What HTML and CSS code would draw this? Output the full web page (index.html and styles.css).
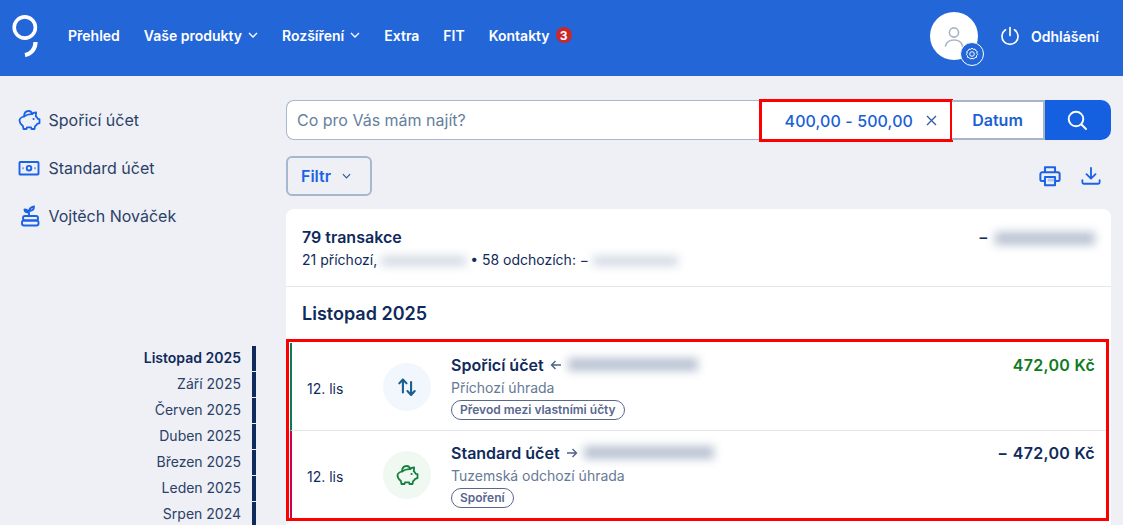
FILE: index.html
```html
<!DOCTYPE html>
<html lang="cs">
<head>
  <meta charset="UTF-8" />
  <title>Přehled</title>
  <link rel="stylesheet" href="styles.css">
</head>
<body>
  <header class="topbar">
    <svg class="logo" width="26" height="42" viewBox="0 0 26 42" fill="none" stroke="#fff">
      <circle cx="12.8" cy="12.500" r="10.600" stroke-width="3.600" />
      <path d="M23.500 27 C23.500 34 19 39 13 40" stroke-width="4.200" />
    </svg>
    <nav class="mainnav">
      <a href="#">Přehled</a>
      <a href="#">Vaše produkty <svg class="chev" width="10" height="6" viewBox="0 0 10 6"><path d="M1 1l4 4 4-4" /></svg></a>
      <a href="#">Rozšíření <svg class="chev" width="10" height="6" viewBox="0 0 10 6"><path d="M1 1l4 4 4-4" /></svg></a>
      <a href="#">Extra</a>
      <a href="#">FIT</a>
      <a href="#">Kontakty <span class="badge">3</span></a>
    </nav>
    <div class="user">
      <div class="avatar">
        <svg class="person" width="24" height="24" viewBox="0 0 24 24" fill="none" stroke="#a7b4c6" stroke-width="1.600" stroke-linecap="round">
          <circle cx="12" cy="7.500" r="4.600" />
          <path d="M3.500 21c1-4.200 4.500-6 8.500-6s7.500 1.800 8.500 6" />
        </svg>
        <span class="gear">
          <svg width="14" height="14" viewBox="0 0 14 14" fill="none" stroke="#fff" stroke-width="1">
            <path d="M7 1.200l1.300 1.100 1.700-.2.700 1.600 1.500.8-.4 1.700.9 1.300-1.200 1.200-.1 1.700-1.700.3-1.100 1.300-1.600-.7-1.600.7-1.100-1.300-1.700-.3-.1-1.700-1.200-1.200.9-1.300-.4-1.700 1.500-.8.700-1.600 1.700.2z" />
            <circle cx="7" cy="7" r="2.300" />
          </svg>
        </span>
      </div>
      <a href="#" class="logout">
        <svg width="20" height="20" viewBox="0 0 20 20" fill="none" stroke="#fff" stroke-width="1.700" stroke-linecap="round">
          <path d="M10 1.500v8" />
          <path d="M5.500 3.800a8 8 0 1 0 9 0" />
        </svg>
        Odhlášení
      </a>
    </div>
  </header>

  <div class="page">
    <aside class="side">
      <ul class="accounts">
        <li>
          <svg width="24" height="24" viewBox="0 0 24 24" fill="none" stroke="#1a62e6" stroke-width="1.800" stroke-linejoin="round" stroke-linecap="round">
            <path d="M7 8.500C7.200 5 9 3 11.500 3c2 0 3.300 1.200 3.600 3.200 1.200-1.300 2.700-1.800 4-1.700l-.3 3.700c1 .8 1.600 1.600 2 2.600l1.700.4v4l-2.200.6c-.5.9-1.200 1.700-2.300 2.400l-.5 2.800h-3l-.4-1.600h-4.200l-.4 1.600h-3l-.6-3C3.500 16 2.500 14.200 2.500 12.500c0-1.800 1.800-3.300 4.500-4z" />
            <path d="M7 8.500c2.500-1.800 5.300-2.500 8-2.300" />
            <path d="M16.500 11h.1" stroke-width="2" />
          </svg>
          Spořicí účet
        </li>
        <li>
          <svg width="24" height="24" viewBox="0 0 24 24" fill="none" stroke="#1a62e6" stroke-width="1.900">
            <rect x="2.500" y="6" width="19" height="12.500" rx=".8" />
            <circle cx="12" cy="12.200" r="2.300" />
            <path d="M5.500 12.200h1M17.500 12.200h1" stroke-width="2" />
          </svg>
          Standard účet
        </li>
        <li>
          <svg width="24" height="24" viewBox="0 0 24 24" fill="none" stroke="#1a62e6" stroke-width="1.900" stroke-linecap="round" stroke-linejoin="round">
            <path d="M12 12V7.500M12 8.500C11 6 9 5.500 7.500 5.500c0 2 1.500 3 4.500 3zM12 7c.5-2.500 2.500-4 5-4.500 0 3-2 4.500-5 4.500z" />
            <rect x="6" y="12" width="15" height="4.500" rx="2" />
            <rect x="5" y="16.500" width="16.500" height="5" rx="2" />
          </svg>
          Vojtěch Nováček
        </li>
      </ul>
      <ul class="months">
        <li class="current">Listopad 2025</li>
        <li>Září 2025</li>
        <li>Červen 2025</li>
        <li>Duben 2025</li>
        <li>Březen 2025</li>
        <li>Leden 2025</li>
        <li>Srpen 2024</li>
      </ul>
    </aside>

    <main class="content">
      <form class="search">
        <input type="text" placeholder="Co pro Vás mám najít?" />
        <div class="chip">
          400,00 - 500,00
          <svg width="11" height="11" viewBox="0 0 11 11" fill="none" stroke="#2f5aa8" stroke-width="1.300"><path d="M1 1l9 9M10 1l-9 9" /></svg>
        </div>
        <button type="button" class="date-btn">Datum</button>
        <button type="button" class="search-btn">
          <svg width="22" height="22" viewBox="0 0 22 22" fill="none" stroke="#fff" stroke-width="1.900" stroke-linecap="round"><circle cx="10" cy="10" r="7.300" /><path d="M15.500 15.500l4.500 4.500" /></svg>
        </button>
      </form>

      <div class="tools">
        <button type="button" class="filter">Filtr <svg class="chev" width="9" height="6" viewBox="0 0 10 6"><path d="M1 1l4 4 4-4" /></svg></button>
        <div class="tool-icons">
          <svg width="22" height="22" viewBox="0 0 24 24" fill="none" stroke="#1a62e6" stroke-width="2.200" stroke-linejoin="round">
            <path d="M6.500 8V2.500h11V8" />
            <path d="M6 17.500H3a1.500 1.500 0 0 1-1.500-1.500v-6A2 2 0 0 1 3.500 8h17a2 2 0 0 1 2 2v6a1.500 1.500 0 0 1-1.500 1.500h-3" />
            <rect x="6.500" y="13" width="11" height="9" />
            <rect x="9.500" y="15" width="7" height="3" fill="#a9c3f2" stroke="none" />
          </svg>
          <svg width="20" height="20" viewBox="0 0 22 22" fill="none" stroke="#1a62e6" stroke-width="2" stroke-linecap="round" stroke-linejoin="round">
            <path d="M11 2v11.500M6 9l5 5 5-5" />
            <path d="M1.500 15.500V18a1.500 1.500 0 0 0 1.500 1.500h16a1.500 1.500 0 0 0 1.500-1.500v-2.500" />
          </svg>
        </div>
      </div>

      <section class="card">
        <div class="summary">
          <div>
            <strong>79 transakce</strong>
            <p>21 příchozí, <span class="blur blur-sm"></span> • 58 odchozích: − <span class="blur blur-sm"></span></p>
          </div>
          <div class="total">− <span class="blur blur-total"></span></div>
        </div>
        <h2>Listopad 2025</h2>
        <div class="rows">
          <div class="row in">
            <span class="date">12. lis</span>
            <span class="circle blue">
              <svg width="20" height="20" viewBox="0 0 22 22" fill="none" stroke="#17608f" stroke-width="2.300" stroke-linecap="round" stroke-linejoin="round">
                <path d="M6.500 17V3M2.500 7l4-4.200 4 4.200" />
                <path d="M15.500 5.500v14M11.500 15.500l4 4.200 4-4.200" />
              </svg>
            </span>
            <div class="info">
              <div class="title">Spořicí účet
                <svg class="arrow" width="12" height="10" viewBox="0 0 12 10"><path d="M11 5H1.500M5.500 1l-4 4 4 4" /></svg>
                <span class="blur blur-name"></span>
              </div>
              <div class="sub">Příchozí úhrada</div>
              <span class="tag">Převod mezi vlastními účty</span>
            </div>
            <span class="amount plus">472,00 Kč</span>
          </div>
          <div class="row out">
            <span class="date">12. lis</span>
            <span class="circle green">
              <svg width="24" height="24" viewBox="0 0 24 24" fill="none" stroke="#15803d" stroke-width="1.800" stroke-linejoin="round" stroke-linecap="round">
                <path d="M7 8.500C7.200 5 9 3 11.500 3c2 0 3.300 1.200 3.600 3.200 1.200-1.300 2.700-1.800 4-1.700l-.3 3.700c1 .8 1.600 1.600 2 2.600l1.700.4v4l-2.200.6c-.5.9-1.200 1.700-2.300 2.400l-.5 2.800h-3l-.4-1.600h-4.200l-.4 1.600h-3l-.6-3C3.500 16 2.500 14.200 2.500 12.500c0-1.800 1.800-3.300 4.500-4z" />
                <path d="M7 8.500c2.500-1.800 5.300-2.500 8-2.300" />
                <path d="M16.500 11h.1" stroke-width="2" />
              </svg>
            </span>
            <div class="info">
              <div class="title">Standard účet
                <svg class="arrow" width="12" height="10" viewBox="0 0 12 10"><path d="M1 5h9.500M6.500 1l4 4-4 4" /></svg>
                <span class="blur blur-name"></span>
              </div>
              <div class="sub">Tuzemská odchozí úhrada</div>
              <span class="tag">Spoření</span>
            </div>
            <span class="amount">− 472,00 Kč</span>
          </div>
        </div>
      </section>
    </main>
  </div>
</body>
</html>
```

FILE: styles.css
```css
html, body {
  height: 100%;
  overflow: hidden;
}

body {
  margin: 0;
  font-family: Inter, "Noto Sans", sans-serif;
  color: #0f2a5c;
  background-color: #eef0f5;
}

ul {
  list-style: none;
  margin: 0;
  padding: 0;
}

/* Horni lista */
.topbar {
  display: flex;
  align-items: center;
  box-sizing: border-box;
  height: 76px;
  padding: 0 24px 4px 12px;
  background-color: #2366d8;
}

.logo {
  flex-shrink: 0;
}

.mainnav {
  display: flex;
  align-items: center;
  gap: 24px;
  margin: 0 0 2px 30px;
  flex: 1;
}

.mainnav a,
.logout {
  display: flex;
  align-items: center;
  gap: 6px;
  color: #fff;
  font-size: 14px;
  font-weight: 600;
  text-decoration: none;
  white-space: nowrap;
}

.chev {
  fill: none;
  stroke: currentColor;
  stroke-width: 1.300;
}

.badge {
  display: flex;
  align-items: center;
  justify-content: center;
  width: 16px;
  height: 16px;
  border-radius: 50%;
  background-color: #c9282d;
  font-size: 12px;
  font-weight: 700;
}

.user {
  display: flex;
  align-items: center;
  gap: 22px;
}

.avatar {
  position: relative;
  display: flex;
  align-items: center;
  justify-content: center;
  width: 48px;
  height: 48px;
  border-radius: 50%;
  background-color: #fff;
}

.person {
  margin-top: 1px;
}

.gear {
  position: absolute;
  right: -6px;
  bottom: -6px;
  display: flex;
  align-items: center;
  justify-content: center;
  width: 22px;
  height: 22px;
  border: 1px solid #fff;
  border-radius: 50%;
  background-color: #2366d8;
}

.logout {
  gap: 11px;
}

/* Rozlozeni */
.page {
  display: flex;
}

.side {
  width: 256px;
  margin-right: 30px;
  flex-shrink: 0;
}

.accounts {
  padding: 20px 0 0 17px;
}

.accounts li {
  display: flex;
  align-items: center;
  gap: 7.500px;
  height: 48px;
  font-size: 16px;
  color: #2b4067;
}

.months {
  margin-top: 106px;
}

.months li {
  height: 25px;
  margin-bottom: 1px;
  padding-right: 11px;
  border-right: 4px solid #0f2a5c;
  font-size: 14px;
  line-height: 24px;
  text-align: right;
  color: #2b4067;
}

.months .current {
  font-weight: 600;
  color: #0f2a5c;
}

.content {
  flex: 1;
  margin-right: 12px;
  min-width: 0;
}

/* Hledani */
.search {
  display: flex;
  height: 40px;
  margin-top: 24px;
}

.search input {
  flex: 1;
  min-width: 0;
  padding: 0 10px;
  border: 1px solid #a6b8cf;
  border-right: none;
  border-radius: 8px 0 0 8px;
  background-color: #fff;
  font-family: inherit;
  font-size: 16px;
  outline: none;
}

.search input::placeholder {
  color: #667f9c;
}

.chip {
  display: flex;
  align-items: center;
  justify-content: flex-end;
  gap: 13px;
  width: 188px;
  box-sizing: border-box;
  padding-right: 13px;
  margin: 2px 2px 1px;
  background-color: #fff;
  outline: 3px solid #f00;
  font-size: 16px;
  font-weight: 500;
  letter-spacing: .1px;
  color: #1a5fd6;
}

.date-btn {
  width: 93px;
  border: 2px solid #a6b5c8;
  border-left-width: 0;
  background-color: #fff;
  font-family: inherit;
  font-size: 16px;
  font-weight: 600;
  color: #1a5fd6;
}

.search-btn {
  display: flex;
  align-items: center;
  justify-content: center;
  width: 66px;
  padding: 0 2px 0 0;
  border: none;
  border-radius: 0 10px 10px 0;
  background-color: #1560e0;
}

.tools {
  display: flex;
  align-items: center;
  justify-content: space-between;
  margin-top: 16px;
  padding-right: 10px;
}

.filter {
  display: flex;
  align-items: center;
  justify-content: center;
  gap: 11px;
  width: 86px;
  height: 40px;
  padding: 0 6px 0 0;
  border: 2px solid #a6b8cf;
  border-radius: 6px;
  background-color: transparent;
  font-family: inherit;
  font-size: 16px;
  font-weight: 600;
  color: #1a62e6;
}

.filter .chev {
  color: #2b5a9e;
}

.tool-icons {
  display: flex;
  align-items: center;
  gap: 20px;
}

/* Karta s transakcemi */
.card {
  margin-top: 13px;
  border-radius: 8px 8px 0 0;
  background-color: #fff;
  height: 320px;
}

.summary {
  display: flex;
  justify-content: space-between;
  height: 78px;
  box-sizing: border-box;
  padding: 18px 16px 0;
  border-bottom: 1px solid #e4e7ee;
}

.summary strong {
  font-size: 16px;
  font-weight: 600;
}

.summary p {
  margin: 4px 0 0;
  font-size: 14px;
}

.total {
  font-size: 16px;
  font-weight: 500;
}

.blur {
  display: inline-block;
  vertical-align: middle;
  background-color: #b9c2d2;
  filter: blur(5px);
}

.blur-sm {
  width: 85px;
  height: 10px;
  background-color: #d3d9e4;
}

.blur-total {
  width: 100px;
  height: 13px;
  margin-left: 2px;
}

.blur-name {
  width: 130px;
  height: 13px;
}

.card h2 {
  margin: 0;
  height: 55px;
  padding: 16px 16px 0;
  box-sizing: border-box;
  font-size: 18px;
  line-height: 22px;
  font-weight: 600;
}

.rows {
  margin: 0 5px 0 3px;
  padding-top: 1px;
  outline: 3px solid #f00;
}

.row {
  display: flex;
  align-items: center;
  box-sizing: border-box;
  height: 87px;
  margin-left: 1px;
  padding-right: 11px;
  border-left: 2px solid #0a7a5a;
}

.row.in {
  height: 88px;
  border-bottom: 1px solid #e4e7ee;
}

.row.out {
  border-left-color: #d1004f;
}

.date {
  width: 76px;
  margin-top: 3px;
  padding-left: 15px;
  box-sizing: content-box;
  font-size: 14px;
  flex-shrink: 0;
}

.circle {
  display: flex;
  align-items: center;
  justify-content: center;
  width: 48px;
  height: 48px;
  margin-right: 20px;
  border-radius: 50%;
  flex-shrink: 0;
}

.circle.blue {
  background-color: #f1f7fd;
}

.circle.green {
  background-color: #eff8f1;
}

.info {
  flex: 1;
}

.title {
  display: flex;
  align-items: center;
  gap: 6px;
  height: 22px;
  font-size: 16px;
  font-weight: 600;
}

.arrow {
  fill: none;
  stroke: #4f6385;
  stroke-width: 1.400;
}

.sub {
  margin-top: 2px;
  font-size: 14px;
  line-height: 20px;
  color: #667a96;
}

.tag {
  display: inline-block;
  height: 18px;
  margin-top: 1px;
  padding: 0 8px;
  border: 1px solid #58678f;
  border-radius: 10px;
  font-size: 12px;
  line-height: 18px;
  font-weight: 600;
  color: #58678f;
}

.amount {
  align-self: flex-start;
  margin-top: 12px;
  font-size: 16px;
  font-weight: 600;
  letter-spacing: .3px;
}

.amount.plus {
  color: #0f7a22;
}
```
